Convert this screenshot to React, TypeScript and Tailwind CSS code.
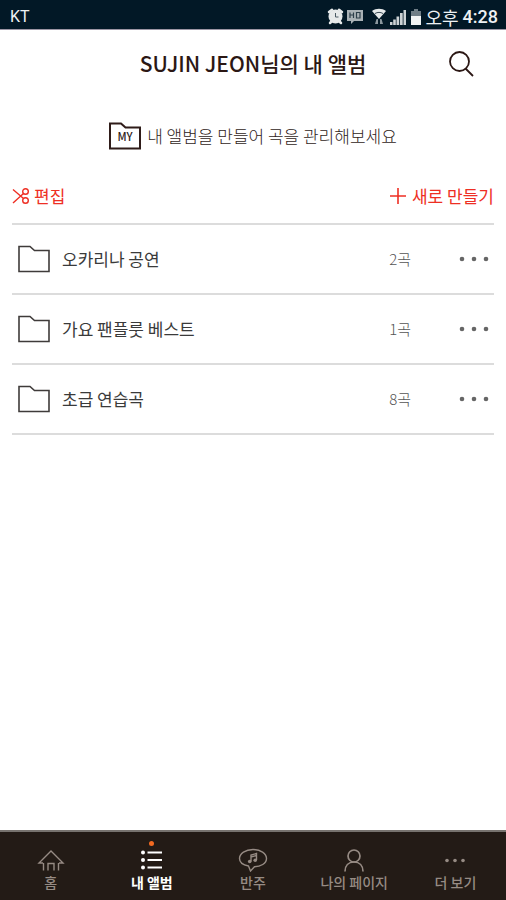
import React from "react";

type Album = {
  title: string;
  count: number;
};

const albums: Album[] = [
  { title: "오카리나 공연", count: 2 },
  { title: "가요 팬플룻 베스트", count: 1 },
  { title: "초급 연습곡", count: 8 },
];

const FolderIcon = ({ label }: { label?: string }) => (
  <svg
    width="32"
    height="28"
    viewBox="0 0 32 28"
    fill="none"
    stroke="currentColor"
    strokeWidth={label ? 2 : 1.6}
    aria-hidden="true"
  >
    <path d="M1 1.5H12L16.5 5.5H31V26.5H1Z" />
    {label && (
      <text
        x="16"
        y="19"
        textAnchor="middle"
        fontSize="11"
        fontWeight="500"
        fill="currentColor"
        stroke="none"
      >
        {label}
      </text>
    )}
  </svg>
);

const StatusBar = () => (
  <div className="flex h-[30px] items-center justify-between border-b border-[#9c95a4] bg-[#021826] pt-1 pr-2 pl-[10px] text-[#eef1f3]">
    <span className="font-['Roboto',sans-serif] text-base">KT</span>
    <div className="flex items-center gap-1">
      <div className="flex items-center gap-[2px]">
        {/* alarm */}
        <svg width="17" height="17" viewBox="0 0 17 17" aria-hidden="true">
          <g stroke="#e6e9ea" strokeWidth="2.5" strokeLinecap="round">
            <path d="M2 4L5 1.8M15 4L12 1.8M3 15L5 13M14 15L12 13" />
          </g>
          <circle cx="8.5" cy="8.5" r="7" fill="#e6e9ea" />
          <path d="M8.5 5V9H11.5" stroke="#4a5a64" fill="none" />
        </svg>
        {/* HD voice */}
        <svg width="18" height="15" viewBox="0 0 18 15" aria-hidden="true">
          <path d="M1 1H17V12H8L5 15V12H1Z" fill="#a9b1b5" />
          <path
            d="M4 3.5V9M7.5 3.5V9M4 6H7.5M10.5 3.5V9H14V3.5Z"
            stroke="#2c3e49"
            strokeWidth="1.2"
            fill="none"
          />
        </svg>
      </div>
      {/* wifi */}
      <svg
        className="ml-1"
        width="14"
        height="17"
        viewBox="0 0 14 17"
        aria-hidden="true"
      >
        <path d="M0 3C4 0 10 0 14 3L7 11Z" fill="#e6e9ea" />
        <path d="M3 5.5C5.5 4 8.5 4 11 5.5" stroke="#3a4a55" fill="none" />
        <path d="M3 16L4.5 11H6V16ZM8 16V11H9.5L11 16Z" fill="#8b979e" />
      </svg>
      {/* signal */}
      <svg width="17" height="16" viewBox="0 0 17 16" aria-hidden="true">
        <path
          d="M0 13H2.5V16H0ZM3.2 10.5H5.8V16H3.2ZM6.5 7.5H9.2V16H6.5ZM10 4H12.7V16H10ZM13.5 1H16V16H13.5Z"
          fill="#cdd2d5"
        />
      </svg>
      {/* battery */}
      <svg width="10" height="16" viewBox="0 0 10 16" aria-hidden="true">
        <path d="M3 0H7V2H10V7H0V2H3Z" fill="#6f7d86" />
        <path d="M0 7H10V16H0Z" fill="#f1f3f4" />
      </svg>
      <span className="flex items-center gap-1 text-[18px] leading-6">
        오후
        <span className="font-['Roboto',sans-serif] font-medium">4:28</span>
      </span>
    </div>
  </div>
);

const AlbumRow = ({ title, count }: Album) => (
  <li className="flex h-[70px] items-center border-b-2 border-[#dcdcdc] pr-[5px] pl-[6px]">
    <span className="text-[#3f3b3a]">
      <FolderIcon />
    </span>
    <span className="ml-3 flex-1 text-[17px] text-[#3a3a3a]">{title}</span>
    <span className="text-[15px] font-light text-[#555]">{count}곡</span>
    <button
      type="button"
      aria-label={`${title} 메뉴`}
      className="ml-12 text-[#666]"
    >
      <svg width="30" height="6" viewBox="0 0 30 6" fill="currentColor">
        <circle cx="3" cy="3" r="2.3" />
        <circle cx="15" cy="3" r="2.3" />
        <circle cx="27" cy="3" r="2.3" />
      </svg>
    </button>
  </li>
);

const iconProps = {
  width: 30,
  height: 24,
  viewBox: "0 0 30 24",
  fill: "none",
  stroke: "currentColor",
  strokeWidth: 1.4,
  "aria-hidden": true,
} as const;

const tabs = [
  {
    label: "홈",
    icon: (
      <svg {...iconProps}>
        <path d="M7 15H3L15 3L27 15H23M7.5 15V22.5M22.5 15V22.5M12 22.5V15.5H18V22.5" />
      </svg>
    ),
  },
  {
    label: "내 앨범",
    active: true,
    icon: (
      <svg {...iconProps} strokeWidth={2}>
        <path d="M10.5 4.5H25M10.5 12H25M10.5 19.5H25" />
        <g fill="currentColor" stroke="none">
          <circle cx="6" cy="4.5" r="2" />
          <circle cx="6" cy="12" r="2" />
          <circle cx="6" cy="19.5" r="2" />
        </g>
      </svg>
    ),
  },
  {
    label: "반주",
    icon: (
      <svg {...iconProps}>
        <path d="M10.5 18C5 17 1.5 14 1.5 10.5C1.5 5.5 7.5 1.5 15 1.5S28.5 5.5 28.5 10.5S22.5 18.7 16.5 18.7L12.5 23Z" />
        <path d="M13 13.5V7L18.5 5.5V12M13 9L18.5 7.5" />
        <g fill="currentColor" stroke="none">
          <circle cx="11.7" cy="13.5" r="1.8" />
          <circle cx="17.2" cy="12.2" r="1.8" />
        </g>
      </svg>
    ),
  },
  {
    label: "나의 페이지",
    icon: (
      <svg {...iconProps} strokeWidth={1.7}>
        <circle cx="15" cy="8" r="6" />
        <path d="M6 23.5C6 17.5 9.5 14 15 14S24 17.5 24 23.5" />
      </svg>
    ),
  },
  {
    label: "더 보기",
    icon: (
      <svg {...iconProps}>
        <g fill="currentColor" stroke="none">
          <circle cx="7" cy="12.5" r="1.8" />
          <circle cx="15" cy="12.5" r="1.8" />
          <circle cx="23" cy="12.5" r="1.8" />
        </g>
      </svg>
    ),
  },
];

const TabBar = () => (
  <nav className="grid h-[70px] grid-cols-5 border-t-2 border-[#77736f] bg-[#231b16]">
    {tabs.map((tab) => (
      <a
        key={tab.label}
        href="#"
        aria-current={tab.active ? "page" : undefined}
        className={
          tab.active
            ? "relative flex flex-col items-center pt-4 text-sm leading-5 font-bold text-white"
            : "relative flex flex-col items-center pt-4 text-sm leading-5 font-medium text-[#968b84]"
        }
      >
        {tab.active && (
          <span className="absolute top-[9px] size-[5px] rounded-full bg-[#f26a21]" />
        )}
        {tab.icon}
        {tab.label}
      </a>
    ))}
  </nav>
);

const App = () => {
  return (
    <div className="flex min-h-screen flex-col bg-white font-['Noto_Sans_CJK_KR',sans-serif]">
      <StatusBar />
      <header className="grid h-[68px] grid-cols-[1fr_auto_1fr] items-center px-8 text-[#2b1714]">
        <h1 className="col-start-2 text-[21px] font-medium">
          SUJIN JEON님의 내 앨범
        </h1>
        <button type="button" aria-label="검색" className="justify-self-end">
          <svg
            width="25"
            height="26"
            viewBox="0 0 25 26"
            fill="none"
            stroke="currentColor"
            strokeWidth="1.8"
          >
            <circle cx="10.5" cy="10.5" r="9.5" />
            <path d="M16.5 17.5L24 25" />
          </svg>
        </button>
      </header>
      <main className="flex-1 px-3">
        <p className="flex h-[76px] items-center justify-center gap-[6px] text-[17px] font-light text-[#2f1c19]">
          <FolderIcon label="MY" />내 앨범을 만들어 곡을 관리해보세요
        </p>
        <div className="flex h-[51px] items-center justify-between border-b-2 border-[#dcdcdc] pb-[5px] text-[17px] text-[#ee2f24]">
          <button type="button" className="flex items-center gap-1">
            <svg
              width="18"
              height="18"
              viewBox="0 0 18 18"
              fill="none"
              stroke="currentColor"
              strokeWidth="1.4"
              aria-hidden="true"
            >
              <path d="M1 2.5L11.5 11.5M1 16L11.5 6.5" />
              <circle cx="13.5" cy="4.5" r="2.8" />
              <circle cx="13.5" cy="13.5" r="2.8" />
            </svg>
            편집
          </button>
          <button type="button" className="flex items-center gap-[6px]">
            <svg
              width="16"
              height="16"
              viewBox="0 0 16 16"
              stroke="currentColor"
              strokeWidth="1.6"
              aria-hidden="true"
            >
              <path d="M8 0V16M0 8H16" />
            </svg>
            새로 만들기
          </button>
        </div>
        <ul>
          {albums.map((album) => (
            <AlbumRow key={album.title} {...album} />
          ))}
        </ul>
      </main>
      <TabBar />
    </div>
  );
};

export default App;
